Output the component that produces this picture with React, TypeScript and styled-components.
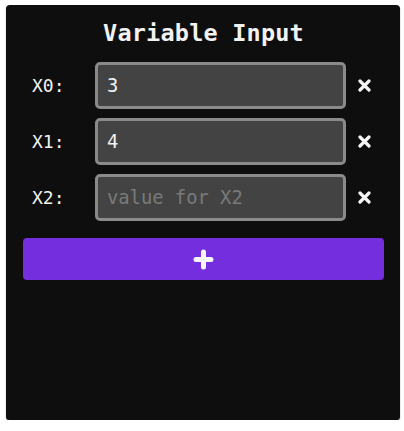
import React from "react";
import styled, { createGlobalStyle } from "styled-components";

const GlobalStyle = createGlobalStyle`
  html, body {
    margin: 0;
    padding: 0;
    background: #ffffff;
  }
  #root {
    padding: 5px 4px 0 6px;
  }
`;

const Panel = styled.div`
  box-sizing: border-box;
  width: 394px;
  height: 415px;
  background: #0e0e0e;
  border-radius: 4px;
  box-shadow: 0 1px 1px #4a4a4a;
  padding: 13px 16px 0 17px;
  font-family: "DejaVu Sans Mono", "Liberation Mono", monospace;
  color: #f2f2f2;
`;

const Title = styled.h2`
  margin: 0 0 14px;
  font-size: 23.5px;
  line-height: 30px;
  font-weight: bold;
  text-align: center;
  letter-spacing: 0.2px;
`;

const Rows = styled.div`
  display: flex;
  flex-direction: column;
  gap: 9px;
`;

const Row = styled.div`
  display: grid;
  grid-template-columns: 63px 251px auto;
  align-items: center;
  padding-left: 9px;
`;

const Label = styled.label`
  font-size: 18px;
`;

const Field = styled.input`
  box-sizing: border-box;
  width: 251px;
  height: 47px;
  border: 3px solid #8a8a8a;
  border-radius: 5px;
  background: #434343;
  color: #f2f2f2;
  padding: 0 9px;
  font-family: inherit;
  font-size: 18.8px;
  outline: none;
  &::placeholder {
    color: #7a7a7a;
  }
`;

const RemoveButton = styled.button`
  margin-left: 12px;
  width: 13px;
  height: 13px;
  padding: 0;
  border: none;
  background: none;
  display: flex;
  cursor: pointer;
`;

const AddButton = styled.button`
  margin-top: 17px;
  width: 100%;
  height: 42px;
  border: none;
  border-radius: 4px;
  background: #742edd;
  display: flex;
  align-items: center;
  justify-content: center;
  cursor: pointer;
`;

const vars = [
  { name: "X0", value: "3" },
  { name: "X1", value: "4" },
  { name: "X2", value: "" },
];

export default function App() {
  return (
    <>
      <GlobalStyle />
      <Panel>
        <Title>Variable Input</Title>
        <Rows>
          {vars.map((v) => (
            <Row key={v.name}>
              <Label>{v.name}:</Label>
              <Field
                defaultValue={v.value}
                placeholder={`value for ${v.name}`}
              />
              <RemoveButton aria-label={`remove ${v.name}`}>
                <svg width="13" height="13" viewBox="0 0 13 13">
                  <path
                    d="M2 2L11 11M11 2L2 11"
                    stroke="#f5f5f5"
                    strokeWidth="3.2"
                    strokeLinecap="round"
                  />
                </svg>
              </RemoveButton>
            </Row>
          ))}
        </Rows>
        <AddButton aria-label="add variable">
          <svg width="21" height="21" viewBox="0 0 21 21">
            <path
              d="M10.5 3V18M3 10.5H18"
              stroke="#f5f5f5"
              strokeWidth="5"
              strokeLinecap="round"
            />
          </svg>
        </AddButton>
      </Panel>
    </>
  );
}
